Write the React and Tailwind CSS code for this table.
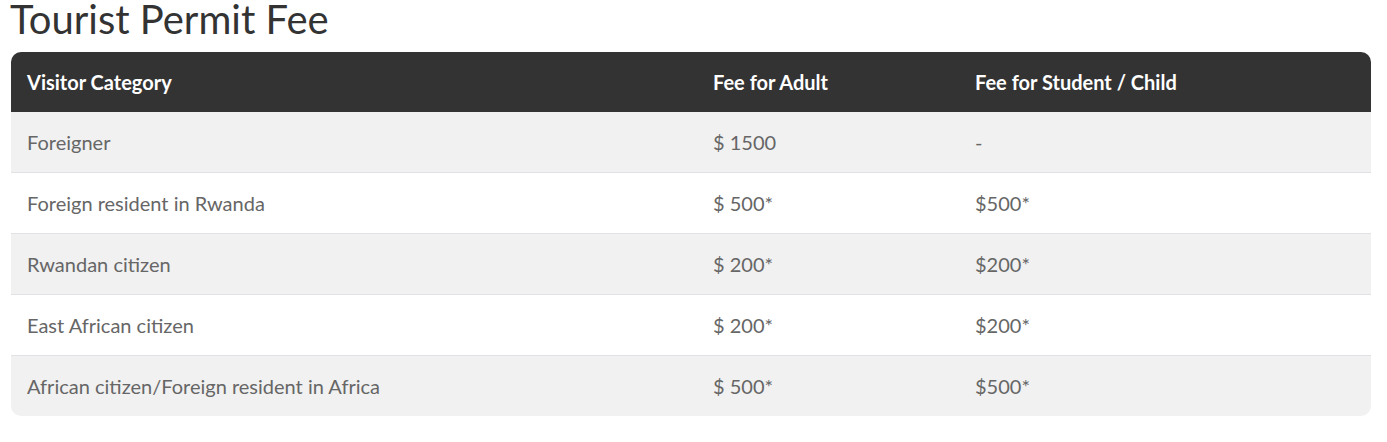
import React from "react";

const rows = [
  ["Foreigner", "$ 1500", "-"],
  ["Foreign resident in Rwanda", "$ 500*", "$500*"],
  ["Rwandan citizen", "$ 200*", "$200*"],
  ["East African citizen", "$ 200*", "$200*"],
  ["African citizen/Foreign resident in Africa", "$ 500*", "$500*"],
];

export default function App() {
  return (
    <div className="bg-white w-[1387px] h-[442px] px-[11px] pt-0" style={{ fontFamily: "Lato, 'Open Sans', sans-serif" }}>
      <h1 className="text-[40px] leading-[40px] font-normal text-[#333] -ml-[1px] h-[53px] -mt-[1px]">Tourist Permit Fee</h1>
      <div className="w-[1360px] rounded-[10px] overflow-hidden">
        <div className="flex h-[60px] items-center bg-[#333333] text-white font-bold text-[20px]">
          <div className="w-[686px] pl-4">Visitor Category</div>
          <div className="w-[262px] pl-4">Fee for Adult</div>
          <div className="flex-1 pl-4">Fee for Student / Child</div>
        </div>
        {rows.map((r, i) => (
          <div
            key={i}
            className={`flex items-center text-[20px] text-[#666666] ${i === rows.length - 1 ? "h-[60px]" : "h-[61px] border-b border-[#e1e1e6]"} ${i % 2 === 0 ? "bg-[#f1f1f1]" : "bg-white"}`}
          >
            <div className="w-[686px] pl-4">{r[0]}</div>
            <div className="w-[262px] pl-4">{r[1]}</div>
            <div className="flex-1 pl-4">{r[2]}</div>
          </div>
        ))}
      </div>
    </div>
  );
}
